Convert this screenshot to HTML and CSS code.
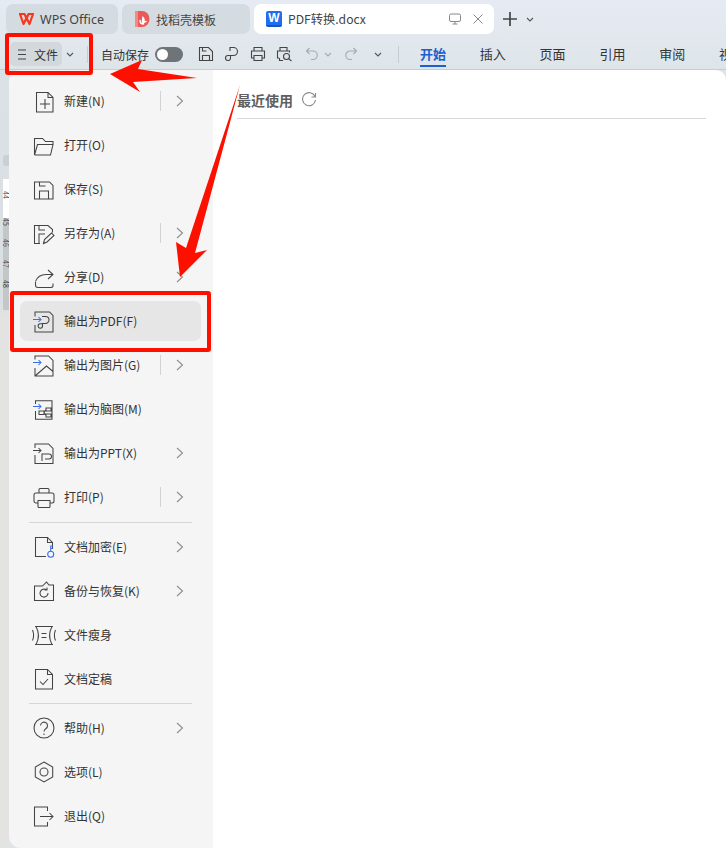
FILE: index.html
```html
<!DOCTYPE html>
<html lang="zh-CN">
<head>
<meta charset="utf-8">
<title>PDF转换.docx</title>
<link rel="stylesheet" href="styles.css">
</head>
<body>
<div class="app">
  <header class="tabs">
    <div class="tab tab-home">
      <svg class="tab-logo" width="17" height="14" viewBox="0 0 17 14"><path d="M1 2h5.500l2 4.500 2-4.500H16M2 2l3.500 10 3-6 3 6L15 2" fill="none" stroke="#f5391d" stroke-width="2.200" stroke-linejoin="round"/></svg>
      <span>WPS Office</span>
    </div>
    <div class="tab tab-template">
      <svg class="tab-logo" width="15" height="16" viewBox="0 0 15 16"><path d="M0 0h7a7.500 8 0 0 1 0 16H0z" fill="#ec5a57"/><path d="M0 0h3v16H0z" fill="#f28a86"/><path d="M5 9.500c0 2 1.500 3.500 3.500 3.500M8 12.500c-1-2-.5-4 0-6 1 1 1.500 2.500 1 4M8.500 12c.5-1 1.500-1.500 2.500-1.500" fill="none" stroke="#fff" stroke-width="1.500" stroke-linecap="round"/></svg>
      <span>找稻壳模板</span>
    </div>
    <div class="tab tab-active">
      <span class="word-logo">W</span>
      <span class="tab-name">PDF转换.docx</span>
      <svg class="tab-tool" width="14" height="14" viewBox="0 0 14 14"><rect x="1.500" y="2" width="11" height="7.500" rx="1.500"/><path d="M4.500 12h5M7 9.500V12"/></svg>
      <svg class="tab-tool tab-close" width="12" height="12" viewBox="0 0 12 12"><path d="M1.500 1.500l9 9M10.500 1.500l-9 9"/></svg>
    </div>
    <svg class="tab-plus" width="16" height="16" viewBox="0 0 16 16"><path d="M8 1v14M1 8h14"/></svg>
    <svg class="chev-small tab-more" width="8" height="5" viewBox="0 0 8 5"><path d="M1 1l3 3 3-3"/></svg>
  </header>

  <nav class="toolbar">
    <div class="file-btn">
      <svg class="file-lines" width="10" height="11" viewBox="0 0 10 11"><path d="M1 1h8M1 5.500h8M1 10h8"/></svg>
      <span class="file-label">文件</span>
    </div>
    <svg class="chev-small file-chev" width="8" height="5" viewBox="0 0 8 5"><path d="M1 1l3 3 3-3"/></svg>
    <i class="tool-sep sep-a"></i>
    <span class="autosave">自动保存</span>
    <span class="toggle"></span>
    <div class="quick">
      <svg width="16" height="16" viewBox="0 0 16 16"><path d="M1.500 1.500h9l4 4v9h-13zM4.500 14.500V9.500h7v5M4.500 1.500v3.500h4"/></svg>
      <svg width="16" height="16" viewBox="0 0 16 16"><path d="M6 9.500h3.500a4 4 0 0 0 0-8H6v3.500M6 9.500H4a2.500 2.500 0 1 0 2.500 2.500V9.500"/></svg>
      <svg width="16" height="16" viewBox="0 0 16 16"><path d="M4 5V1.500h8V5M4 12H1.500V5h13v7H12M4 9.500h8v5H4z"/></svg>
      <svg width="17" height="16" viewBox="0 0 17 16"><path d="M4 5V1.500h7V5M3 12H1.500V5h12v1.500M7 14.500H3.500V12"/><circle cx="10.500" cy="10.500" r="3"/><path d="M13 13l2.500 2"/></svg>
    </div>
    <div class="history">
      <svg width="14" height="14" viewBox="0 0 14 14"><path d="M4.500 1L1.500 4l3 3M1.500 4H8a4 4 0 0 1 0 8.500H6"/></svg>
      <svg class="chev-small chev-off" width="8" height="5" viewBox="0 0 8 5"><path d="M1 1l3 3 3-3"/></svg>
      <svg class="redo" width="14" height="14" viewBox="0 0 14 14"><path d="M9.500 1l3 3-3 3M12.500 4H6a4 4 0 0 0 0 8.500h2"/></svg>
      <svg class="chev-small chev-last" width="8" height="5" viewBox="0 0 8 5"><path d="M1 1l3 3 3-3"/></svg>
    </div>
    <i class="tool-sep sep-b"></i>
    <div class="ribbon">
      <span class="ribbon-active">开始</span>
      <span>插入</span>
      <span>页面</span>
      <span>引用</span>
      <span>审阅</span>
      <span>视图</span>
    </div>
  </nav>

  <div class="workspace">
    <aside class="strip">
      <div class="strip-top"><i class="strip-pill"></i></div>
      <div class="ruler">
        <div class="ruler-light"><span>44</span></div>
        <div class="ruler-dark"><span>45</span><span>46</span><span>47</span><span>48</span></div>
      </div>
    </aside>

    <section class="menu">
      <div class="item">
        <svg class="ico" viewBox="0 0 24 24"><path d="M4.500 3.500H16l5 5v14.500H4.500zM16 3.500v5h5M13 10v10M8 15h10"/></svg>
        <span class="label">新建(N)</span><i class="vsep"></i>
        <svg class="chev" viewBox="0 0 8 12"><path d="M1 1l5.500 5L1 11"/></svg>
      </div>
      <div class="item">
        <svg class="ico" viewBox="0 0 24 24"><path d="M2.500 22V5.500h8l3 3h7.500v3M2.500 22h16l2.500-10.500H5.500L2.500 22"/></svg>
        <span class="label">打开(O)</span>
      </div>
      <div class="item">
        <svg class="ico" viewBox="0 0 24 24"><path d="M2.500 5h15l3.500 3.500v13.500H2.500zM7.500 22v-8h9v8M7.500 5v4h6"/></svg>
        <span class="label">保存(S)</span>
      </div>
      <div class="item">
        <svg class="ico" viewBox="0 0 24 24"><path d="M8 22.500H2.500V4.500H16l4.500 4v3M7 22v-9h6M7 4.500V9h6M11.500 22.500l1-4 7-6.500 2.500 2.500-7 6.500z"/></svg>
        <span class="label">另存为(A)</span><i class="vsep"></i>
        <svg class="chev" viewBox="0 0 8 12"><path d="M1 1l5.500 5L1 11"/></svg>
      </div>
      <div class="item">
        <svg class="ico" viewBox="0 0 24 24"><path d="M16 5l5 4.500-5 4.500M21 9.500h-7c-5 0-9 3-10.500 7M3.500 17v3c0 1.500 1 2.500 2.500 2.500h13c1 0 2-1 2-2v-2"/></svg>
        <span class="label">分享(D)</span>
        <svg class="chev chev-solo" viewBox="0 0 8 12"><path d="M1 1l5.500 5L1 11"/></svg>
      </div>
      <div class="item item-active">
        <svg class="ico" viewBox="0 0 24 24"><path class="accent" d="M1 10.500h8M6.500 8L9 10.500 6.500 13"/><path d="M3 7.500V3h14.500L21 6.500V23H3v-7M10 7.500h3.500a3.500 3.500 0 0 1 0 7h-3V17a2.200 2.200 0 1 1-2.200-2.200h2.200"/></svg>
        <span class="label">输出为PDF(F)</span>
      </div>
      <div class="item">
        <svg class="ico" viewBox="0 0 24 24"><path class="accent" d="M1 9.500h8M6.500 7L9 9.500 6.500 12"/><path d="M3 6.500V3h13.500L21 7.500V23H3v-8M3 23l11.500-10 6.500 5.500"/></svg>
        <span class="label">输出为图片(G)</span><i class="vsep"></i>
        <svg class="chev" viewBox="0 0 8 12"><path d="M1 1l5.500 5L1 11"/></svg>
      </div>
      <div class="item">
        <svg class="ico" viewBox="0 0 24 24"><path class="accent" d="M1 9.500h8M6.500 7L9 9.500 6.500 12"/><path d="M3.500 7V3.700H20v18.600H3.500V14M7 14h5v3.500H7zM14 11h5v3h-5zM14 17h5v3h-5zM12 15.500l2-3M12 15.500l2 3"/></svg>
        <span class="label">输出为脑图(M)</span>
      </div>
      <div class="item">
        <svg class="ico" viewBox="0 0 24 24"><path d="M1 9.500h8M6.500 7L9 9.500 6.500 12M3 7V3h13.500L21 7.500v15H3V14M10 20v-7h7a2.500 2.500 0 0 1 0 5h-4"/></svg>
        <span class="label">输出为PPT(X)</span>
        <svg class="chev chev-solo" viewBox="0 0 8 12"><path d="M1 1l5.500 5L1 11"/></svg>
      </div>
      <div class="item">
        <svg class="ico" viewBox="0 0 24 24"><path d="M7 8V4.500c0-.6.400-1 1-1h8c.6 0 1 .4 1 1V8M6 18H4c-1 0-2-1-2-2v-6c0-1 1-2 2-2h16c1 0 2 1 2 2v6c0 1-1 2-2 2h-2M6 15.500h12v6c0 .6-.4 1-1 1H7c-.6 0-1-.4-1-1z"/></svg>
        <span class="label">打印(P)</span><i class="vsep"></i>
        <svg class="chev" viewBox="0 0 8 12"><path d="M1 1l5.500 5L1 11"/></svg>
      </div>
      <hr class="rule rule-a">
      <div class="item">
        <svg class="ico" viewBox="0 0 24 24"><path d="M14 21.500H3.500v-19h12l5 5v6.500M15.500 2.500v5h5"/><g class="accent"><circle cx="18.700" cy="19.300" r="3"/><path d="M18.700 16.300V11h2.300M18.700 13.500h2"/></g></svg>
        <span class="label">文档加密(E)</span>
        <svg class="chev chev-solo" viewBox="0 0 8 12"><path d="M1 1l5.500 5L1 11"/></svg>
      </div>
      <div class="item">
        <svg class="ico" viewBox="0 0 24 24"><path d="M2.500 21.500V7h8l4-4 2.500 3h4.500v15.500zM16 14a4 4 0 1 1-1.500-3M15 8.500V11h-2.500"/></svg>
        <span class="label">备份与恢复(K)</span>
        <svg class="chev chev-solo" viewBox="0 0 8 12"><path d="M1 1l5.500 5L1 11"/></svg>
      </div>
      <div class="item">
        <svg class="ico" viewBox="0 0 24 24"><path d="M3 3.500h18M3 21.500h18M4 3.500c3 5.500 3 12.500 0 18M20 3.500c-3 5.500-3 12.500 0 18M.5 7c1.500 3.500 1.500 7 0 10.500M23.500 7c-1.500 3.500-1.500 7 0 10.500M9.500 10.500h5M9.500 14.500h5"/></svg>
        <span class="label">文件瘦身</span>
      </div>
      <div class="item">
        <svg class="ico" viewBox="0 0 24 24"><path d="M3.500 2.500h12l5 5v14.500h-17zM15.500 2.500v5h5M8 14.500l3 3 5-5.500"/></svg>
        <span class="label">文档定稿</span>
      </div>
      <hr class="rule rule-b">
      <div class="item">
        <svg class="ico" viewBox="0 0 24 24"><circle cx="12" cy="12" r="10"/><path d="M8.500 9.500a3.500 3.500 0 1 1 5.500 3c-1.400 1-2 1.500-2 3M12 17.500V19"/></svg>
        <span class="label">帮助(H)</span>
        <svg class="chev chev-solo" viewBox="0 0 8 12"><path d="M1 1l5.500 5L1 11"/></svg>
      </div>
      <div class="item">
        <svg class="ico" viewBox="0 0 24 24"><path d="M12 2l8.700 5v10L12 22l-8.700-5V7z"/><circle cx="12" cy="12" r="4"/></svg>
        <span class="label">选项(L)</span>
      </div>
      <div class="item">
        <svg class="ico" viewBox="0 0 24 24"><path d="M15.500 7V3H2.500v19h13v-4M8 12.500h13M17.500 9l3.500 3.500-3.500 3.500"/></svg>
        <span class="label">退出(Q)</span>
      </div>
    </section>

    <main class="recent">
      <div class="recent-head">
        <span>最近使用</span>
        <svg width="16" height="16" viewBox="0 0 16 16"><path d="M14 4.500A6.500 6.500 0 1 0 14.500 8M14.500 1v4h-4"/></svg>
      </div>
    </main>
  </div>

  <svg class="marks" width="726" height="848" viewBox="0 0 726 848">
    <rect class="mark-box" x="7" y="35" width="84" height="38" rx="1"/>
    <rect class="mark-box" x="12" y="293" width="197" height="57" rx="1"/>
    <polygon class="mark-fill" points="110,74 142,60 138,69 197,78 133,82 140,92"/>
    <polygon class="mark-fill" points="240,85 195,253 207,250 180,277 176,242 186,248"/>
  </svg>
</div>
</body>
</html>
```
FILE: styles.css
```css
* { box-sizing: border-box; }
html, body { margin: 0; padding: 0; }
body {
  font-family: "Noto Sans CJK SC", "Noto Sans", sans-serif;
  color: #333;
  overflow: hidden;
}
.app {
  position: relative;
  width: 726px;
  height: 848px;
  overflow: hidden;
  display: flex;
  flex-direction: column;
  background: linear-gradient(180deg, #e6ebf3 0, #dee5e9 70px);
}

/* tab strip */
.tabs {
  display: flex;
  align-items: center;
  gap: 4px;
  height: 34px;
  padding: 4px 0 0 6px;
  flex: none;
}
.tab {
  height: 30px;
  border-radius: 7px;
  display: flex;
  align-items: center;
  font-size: 12px;
  color: #444;
  background: #d5dce1;
  white-space: nowrap;
  flex: none;
}
.tab-home { width: 112px; padding-left: 12px; gap: 5px; font-family: "Noto Sans", sans-serif; font-size: 12.500px; }
.tab-template { width: 128px; padding-left: 13px; gap: 6px; }
.tab-active { width: 240px; padding-left: 12px; background: #fff; }
.word-logo {
  width: 16px;
  height: 16px;
  border-radius: 2px;
  background: #1f6ef0;
  border-bottom: 2px solid #1456c8;
  color: #fff;
  font: bold 12px/14px "Liberation Sans", sans-serif;
  text-align: center;
}
.tab-name { margin-left: 6px; width: 160px; color: #444; font-size: 12.200px; }
.tab-tool { fill: none; stroke: #888; stroke-width: 1; }
.tab-close { margin-left: 10px; }
.tab-plus { margin-left: 4px; fill: none; stroke: #444; stroke-width: 1.700; }
.tab-more { margin-left: 4px; }
.chev-small { fill: none; stroke: #555; stroke-width: 1.100; flex: none; }

/* toolbar */
.toolbar {
  display: flex;
  align-items: center;
  height: 36px;
  padding: 0 0 0 10px;
  font-size: 12px;
  flex: none;
  white-space: nowrap;
}
.file-btn {
  width: 52px;
  height: 24px;
  margin-top: 4px;
  padding-left: 7px;
  border-radius: 5px;
  background: #d2d8db;
  display: flex;
  align-items: center;
  gap: 7px;
  flex: none;
  color: #333;
}
.file-label { flex: none; }
.file-lines { fill: none; stroke: #444; stroke-width: 1; flex: none; }
.file-chev { margin: 4px 0 0 4px; }
.tool-sep { width: 1px; height: 17px; background: #c6cdd1; flex: none; margin-top: 4px; }
.sep-a { margin-left: 13px; }
.sep-b { margin-left: 16px; }
.autosave { margin: 4px 0 0 13px; color: #333; flex: none; }
.toggle {
  position: relative;
  width: 28px;
  height: 15px;
  margin: 4px 0 0 6px;
  border-radius: 8px;
  background: #6e7478;
  flex: none;
}
.toggle::before {
  content: "";
  position: absolute;
  left: 2px;
  top: 2px;
  width: 11px;
  height: 11px;
  border-radius: 50%;
  background: #fff;
}
.quick {
  display: flex;
  gap: 10px;
  margin: 4px 0 0 15px;
  align-items: center;
  flex: none;
}
.quick svg { fill: none; stroke: #444; stroke-width: 1.100; flex: none; }
.history {
  display: flex;
  align-items: center;
  margin: 4px 0 0 12px;
  flex: none;
}
.history > svg:not(.chev-small) { fill: none; stroke: #a5abaf; stroke-width: 1.100; flex: none; }
.chev-off { stroke: #a5abaf; margin-left: 5px; }
.redo { margin-left: 12px; }
.chev-last { margin-left: 16px; }
.ribbon {
  display: flex;
  gap: 33.800px;
  margin: 4px 0 0 21px;
  font-size: 13px;
  flex: none;
}
.ribbon span { position: relative; width: 26px; color: #333; line-height: 20px; flex: none; }
.ribbon .ribbon-active { color: #1c5fd0; font-weight: 700; }
.ribbon-active::after {
  content: "";
  position: absolute;
  left: 0;
  right: 0;
  bottom: -3px;
  height: 2px;
  background: #1c5fd0;
}

/* content */
.workspace {
  flex: 1;
  display: flex;
  min-height: 0;
  border-top: 1px solid #c9cdd0;
  margin-top: -1px;
}
.strip {
  width: 9px;
  flex: none;
  background: linear-gradient(180deg, #dbe2e6 0, #d9dfe2 230px, #e3e3e1 250px);
  display: flex;
  flex-direction: column;
  overflow: hidden;
}
.strip-top { height: 109px; padding: 85px 0 0 3px; }
.strip-pill { display: block; width: 6px; height: 11px; border-radius: 3px 0 0 3px; background: #c9cfd2; }
.ruler { margin-left: 3px; width: 6px; }
.ruler-light { height: 39px; background: #fff; padding-top: 12px; }
.ruler-dark { height: 92px; background: #c3c7c7; padding-top: 0; }
.ruler-light, .ruler-dark {
  writing-mode: vertical-rl;
  font-size: 7px;
  line-height: 6px;
  color: #444;
  display: flex;
  flex-direction: row;
  gap: 13px;
}
.menu {
  width: 204px;
  flex: none;
  padding-top: 9px;
  background: #f5f5f5;
  border-radius: 10px 0 0 12px;
  font-size: 12px;
  display: flex;
  flex-direction: column;
}
.item {
  height: 40px;
  flex: none;
  margin: 2px 12px 2px 11px;
  padding: 0 17px 0 12px;
  border-radius: 7px;
  display: flex;
  align-items: center;
  color: #333;
}
.item-active { background: #e6e6e6; }
.label { margin-bottom: 2px; }
.ico {
  width: 24px;
  height: 24px;
  margin-right: 8px;
  fill: none;
  stroke: #444;
  stroke-width: 1.050;
  flex: none;
}
.ico .accent { stroke: #3a6ee8; }
.vsep { width: 1px; height: 20px; margin-left: auto; background: #d3d3d3; flex: none; }
.chev {
  width: 8px;
  height: 12px;
  margin-left: 15px;
  fill: none;
  stroke: #8d8d8d;
  stroke-width: 1.100;
  flex: none;
}
.chev-solo { margin-left: auto; }
.rule { border: 0; height: 1px; flex: none; background: #d6d6d6; margin-left: 20px; margin-right: 0; width: 163px; }
.rule-a { margin-top: 3px; margin-bottom: 2px; }
.rule-b { margin-top: 2px; margin-bottom: 2px; }
.recent {
  flex: 1;
  background: #fff;
  border-radius: 0 10px 0 0;
  padding: 20px 20px 0 24px;
}
.recent-head {
  display: flex;
  align-items: center;
  gap: 8px;
  height: 29px;
  padding-bottom: 8px;
  border-bottom: 1px solid #d8d8d8;
  font-size: 14px;
  font-weight: 700;
  color: #5f5f5f;
}
.recent-head svg { fill: none; stroke: #8a8a8a; stroke-width: 1.100; }

/* red annotations laid over the screenshot */
.marks { position: absolute; left: 0; top: 0; pointer-events: none; }
.mark-box { fill: none; stroke: #fe1000; stroke-width: 4; }
.mark-fill { fill: #fe1000; }
```
